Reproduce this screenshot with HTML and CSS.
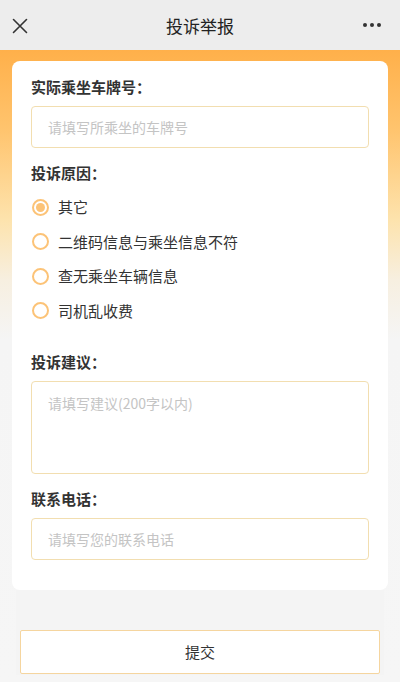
FILE: index.html
```html
<!DOCTYPE html>
<html lang="zh">
<head>
<meta charset="utf-8">
<link rel="stylesheet" href="styles.css">
</head>
<body>
<header class="nav">
  <svg class="nav-close" width="16" height="16" viewBox="0 0 16 16"><path d="M1.5 1.5L14.5 14.5M14.5 1.5L1.5 14.5" stroke="#333" stroke-width="1.6" fill="none" stroke-linecap="round"/></svg>
  <div class="nav-title">投诉举报</div>
  <svg class="nav-more" width="20" height="6" viewBox="0 0 20 6"><circle cx="3" cy="3" r="2" fill="#333"/><circle cx="10" cy="3" r="2" fill="#333"/><circle cx="17" cy="3" r="2" fill="#333"/></svg>
</header>
<main class="page">
  <section class="card">
    <div class="label">实际乘坐车牌号：</div>
    <div class="field"><span class="ph">请填写所乘坐的车牌号</span></div>

    <div class="label reason-label">投诉原因：</div>
    <div class="radios">
      <div class="radio checked"><span class="dot"></span>其它</div>
      <div class="radio"><span class="dot"></span>二维码信息与乘坐信息不符</div>
      <div class="radio"><span class="dot"></span>查无乘坐车辆信息</div>
      <div class="radio"><span class="dot"></span>司机乱收费</div>
    </div>

    <div class="label advice-label">投诉建议：</div>
    <div class="field area"><span class="ph">请填写建议(200字以内)</span></div>

    <div class="label phone-label">联系电话：</div>
    <div class="field"><span class="ph">请填写您的联系电话</span></div>
  </section>
  <div class="footer">
    <button class="submit">提交</button>
  </div>
</main>
</body>
</html>
```

FILE: styles.css
```css
* { box-sizing: border-box; }
html, body { margin: 0; padding: 0; }
body {
  width: 400px;
  height: 682px;
  overflow: hidden;
  font-family: "Noto Sans CJK SC", "Noto Sans", sans-serif;
  background: #f6f6f6;
  color: #333;
}
.nav {
  height: 50px;
  background: #ededed;
  display: flex;
  align-items: center;
  justify-content: space-between;
  padding: 0 18px 0 12px;
}
.nav-close { margin-top: 1px; }
.nav-title {
  font-size: 17px;
  font-weight: 400;
  color: #222;
  position: absolute;
  left: 0; right: 0;
  text-align: center;
  top: 14px;
  line-height: 24px;
  pointer-events: none;
}
.page {
  height: 632px;
  background: linear-gradient(180deg, #ffb04a 0px, #ffc46e 80px, #fde3ad 170px, #f7efe0 230px, #f5f5f5 290px, #f6f6f6 100%);
  padding: 11px 12px 0 12px;
}
.card {
  background: #fff;
  border-radius: 8px;
  padding: 14px 19px 30px 19px;
}
.label {
  font-size: 15px;
  font-weight: 700;
  color: #333;
  line-height: 24px;
}
.field {
  margin-top: 7px;
  height: 42px;
  border: 1px solid #f2deb0;
  border-radius: 4px;
  padding: 0 16px;
  display: flex;
  align-items: center;
}
.field.area {
  height: 93px;
  align-items: flex-start;
  padding-top: 10px;
}
.ph {
  font-size: 14px;
  color: #c4c4c4;
  line-height: 22px;
}
.reason-label { margin-top: 13px; }
.radios {
  margin-top: 11px;
  display: flex;
  flex-direction: column;
  gap: 12.5px;
}
.radio {
  display: flex;
  align-items: center;
  font-size: 15px;
  line-height: 22px;
  color: #333;
  margin-left: 1px;
}
.dot {
  width: 17px;
  height: 17px;
  border: 2px solid #fcc377;
  border-radius: 50%;
  margin-right: 9px;
  display: flex;
  align-items: center;
  justify-content: center;
}
.radio.checked .dot::after {
  content: "";
  width: 9px;
  height: 9px;
  border-radius: 50%;
  background: #fcc377;
}
.advice-label { margin-top: 28px; }
.phone-label { margin-top: 13px; }
.field.phone { margin-top: 8px; }
.footer {
  margin: 0 4px;
  height: 85px;
  background: #f4f4f4;
  padding-top: 40px;
  padding-left: 4px;
  padding-right: 4px;
}
.submit {
  display: block;
  width: 100%;
  height: 44px;
  background: #fff;
  border: 1px solid #f5d59f;
  border-radius: 2px;
  font-family: "Noto Sans CJK SC", "Noto Sans", sans-serif;
  font-size: 15px;
  color: #333;
}
```
